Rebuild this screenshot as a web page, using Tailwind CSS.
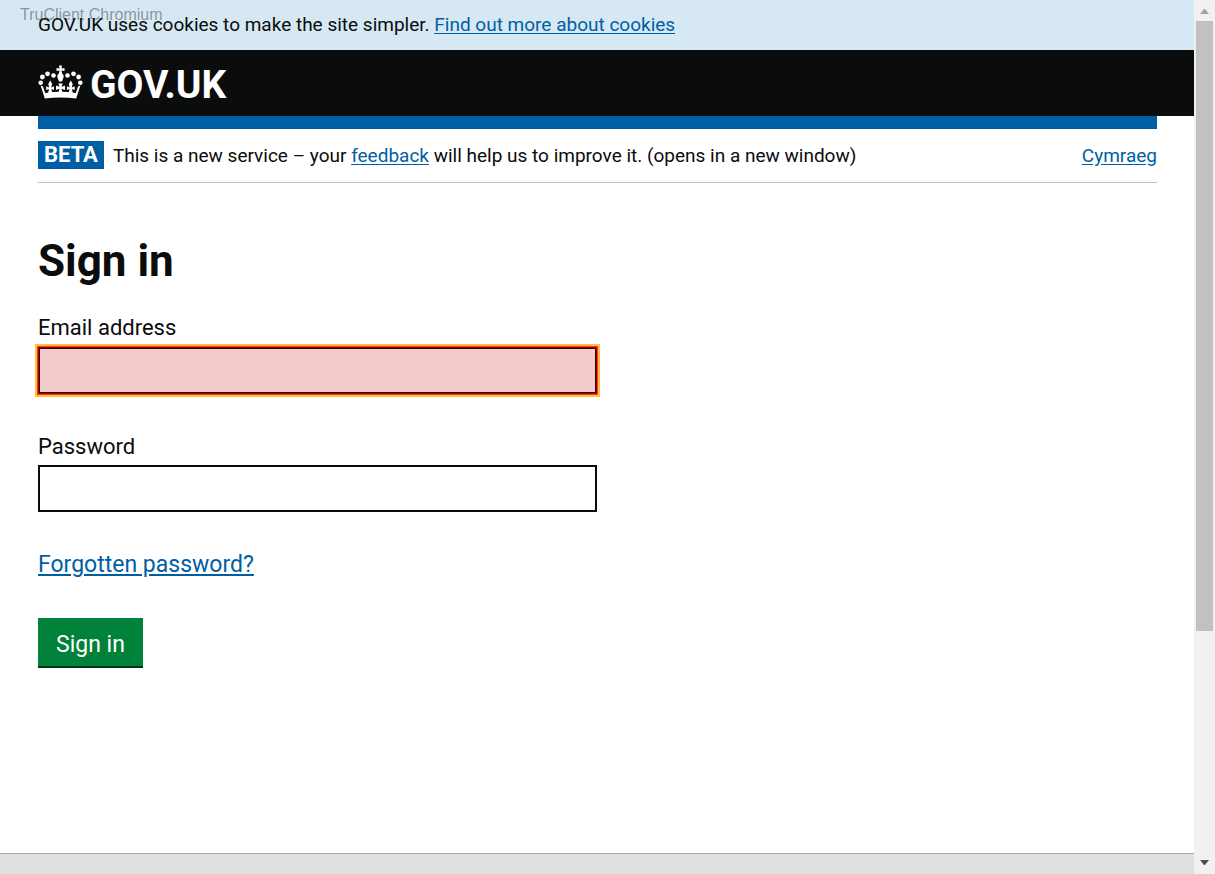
<!DOCTYPE html>
<html lang="en">
<head>
<meta charset="utf-8">
<meta name="viewport" content="width=device-width, initial-scale=1">
<title>Sign in - GOV.UK</title>
<script src="https://cdn.jsdelivr.net/npm/@tailwindcss/browser@4"></script>
</head>
<body class="flex h-screen overflow-hidden bg-white font-['Roboto',sans-serif] text-[19px] leading-6 text-[#0b0c0c]">
<div class="relative flex min-w-0 flex-1 flex-col">
  <div class="absolute top-[5px] left-5 font-['Liberation_Sans',sans-serif] text-base leading-5 text-[#0b0c0c]/40">TruClient Chromium</div>
  <div class="bg-[#d5e8f3] px-[38px] pt-[13px] pb-[13px]">
    <p>GOV.UK uses cookies to make the site simpler. <a href="#" class="text-[#005ea5] underline underline-offset-2">Find out more about cookies</a></p>
  </div>
  <header class="flex h-[66px] shrink-0 items-start bg-[#0b0c0c] px-[38px] pt-[15px]">
    <a href="#" class="flex items-start gap-[7px] text-[39px] leading-10 font-bold text-white">
      <svg class="h-[36px] w-[45px]" viewBox="0 0 45 36" fill="#fff" aria-hidden="true">
        <path d="M21 .5h3l-.5 3 3-.5v3l-3-.5.7 3.500h-3.400l.7-3.500-3 .5V3l3 .5z"/>
        <path d="M22.500 8a3.300 3.300 0 0 1 3 4.500L24 16.500h-3l-1.500-4a3.300 3.300 0 0 1 3-4.500z"/>
        <circle cx="15.500" cy="10.500" r="2.300"/><circle cx="9.500" cy="8.800" r="2.400"/><circle cx="4.400" cy="12" r="2.400"/><circle cx="2.700" cy="17.800" r="2.300"/>
        <circle cx="29.500" cy="10.500" r="2.300"/><circle cx="35.500" cy="8.800" r="2.400"/><circle cx="40.600" cy="12" r="2.400"/><circle cx="42.300" cy="17.800" r="2.300"/>
        <path d="M2.600 20.500l2.400 1 2.200 6.500q15.300-2.500 30.600 0l2.200-6.500 2.400-1L38.200 33.500q-15.700-2.200-31.400 0z"/>
        <path d="M12.200 15.500l1.900 3.500-.9 3.500 2.800-1.300v3.700l-2.500-.9.8 4.500h-4.200l.8-4.500-2.700.9v-3.700l2.900 1.300-.8-3.500z"/>
        <path d="M32.800 15.500l1.900 3.500-.9 3.500 2.900-1.300v3.700l-2.700-.9.800 4.500h-4.200l.8-4.500-2.500.9v-3.700l2.800 1.300-.9-3.500z"/>
        <path d="M20.300 18.500h4.400l-1.200 3.200 3.500-1.200v4.500l-3.500-1.200 1.200 4.200h-4.400l1.200-4.200-3.500 1.200v-4.500l3.500 1.200z"/>
      </svg>
      <span>GOV.UK</span>
    </a>
  </header>
  <main class="mr-[37px] ml-[38px] flex-1">
    <div class="h-[13px] bg-[#005ea5]"></div>
    <div class="flex items-center border-b border-[#bfc1c3] pt-3 pb-[13px]">
      <strong class="mr-[9px] bg-[#005ea5] px-[6px] py-[2px] text-[22px] leading-6 font-bold text-white">BETA</strong>
      <p class="pt-px">This is a new service – your <a href="#" class="text-[#005ea5] underline underline-offset-2">feedback</a> will help us to improve it. (opens in a new window)</p>
      <a href="#" class="ml-auto pt-px text-[#005ea5] underline underline-offset-2">Cymraeg</a>
    </div>
    <h1 class="mt-[53px] text-[44px] leading-[50px] font-bold">Sign in</h1>
    <form class="mt-7 flex w-1/2 flex-col items-start pr-px text-[23px] leading-7">
      <label for="email" class="text-[22px]">Email address</label>
      <input id="email" type="email" class="mt-[5px] h-[47px] w-full border border-[#a00000] bg-[#f4cccc] px-1 shadow-[inset_0_0_0_1px_#300408,0_0_0_1px_#ff3a18,0_0_0_3px_#ffbf47] outline-none">
      <label for="password" class="mt-[39px] text-[22px]">Password</label>
      <input id="password" type="password" class="mt-1 h-[47px] w-full border-2 border-[#0b0c0c] bg-white px-1">
      <a href="#" class="mt-[39px] text-[#005ea5] underline underline-offset-2">Forgotten password?</a>
      <button type="button" class="mt-[39px] bg-[#00823b] px-[18px] pt-[13px] pb-[7px] text-white shadow-[0_2px_0_#003618]">Sign in</button>
    </form>
  </main>
  <footer class="h-[21px] shrink-0 border-t border-[#a1acb2] bg-[#dee0e2]"></footer>
</div>
<div class="flex w-[21px] shrink-0 flex-col bg-[#f1f1f1] px-[2px]" aria-hidden="true">
  <svg class="h-[21px] w-[17px] shrink-0" viewBox="0 0 17 21"><path d="M8 9h1l4 5H4z" fill="#a3a3a3"/></svg>
  <div class="min-h-0 flex-1"><div class="h-[73.3%] bg-[#c1c1c1]"></div></div>
  <svg class="h-[21px] w-[17px] shrink-0" viewBox="0 0 17 21"><path d="M4 7h9l-4 5H8z" fill="#505050"/></svg>
</div>
</body>
</html>
